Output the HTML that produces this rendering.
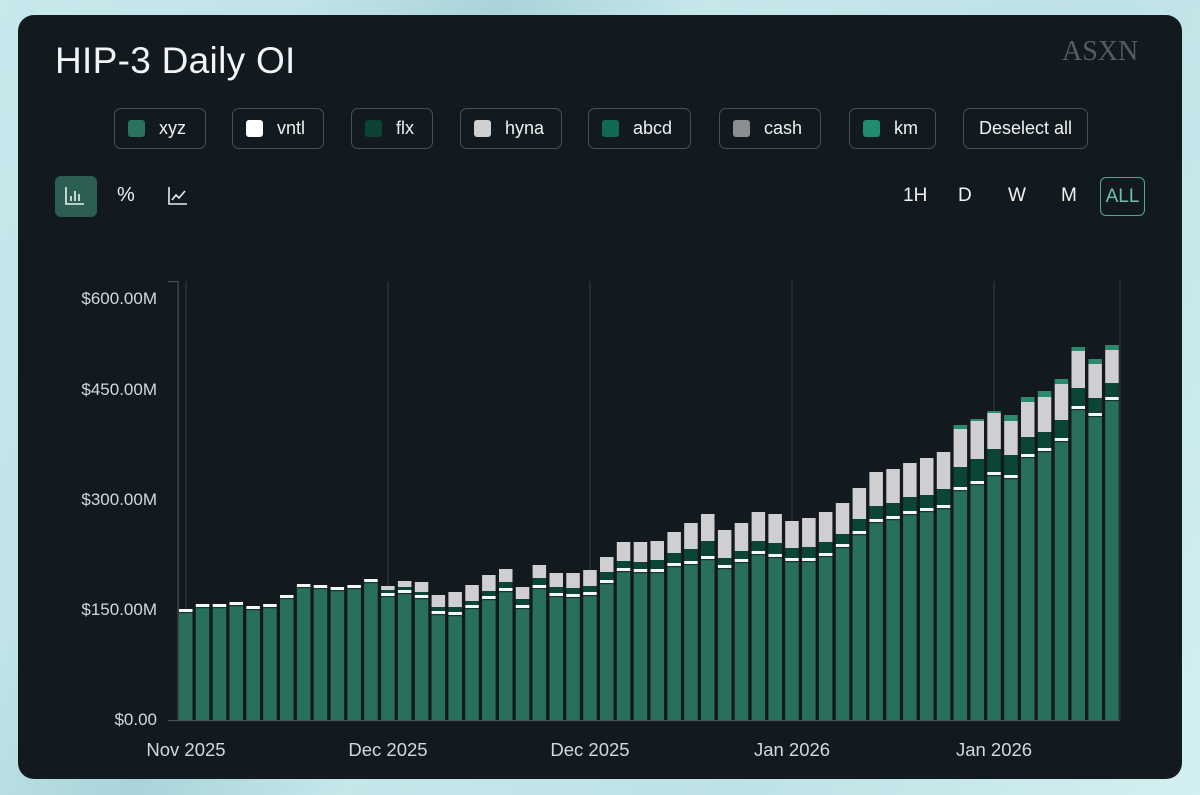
<!DOCTYPE html>
<html><head><meta charset="utf-8">
<style>
*{margin:0;padding:0;box-sizing:border-box}
body{width:1200px;height:795px;overflow:hidden;font-family:"Liberation Sans",sans-serif;
background:linear-gradient(115deg,#c6e9ec 0%,#bfe3e7 20%,#a9d4da 32%,#c4e7ea 45%,#bde2e6 70%,#d3eff1 100%);position:relative}
.card{position:absolute;left:18px;top:15px;width:1164px;height:764px;background:#121a1f;border-radius:16px}
.title{position:absolute;left:55px;top:40px;font-size:37px;color:#f2f4f5;letter-spacing:0.3px}
.logo{position:absolute;left:1062px;top:36px;font-family:"Liberation Serif",serif;font-size:28px;color:#575c60;letter-spacing:0px}
.btn{position:absolute;top:108px;height:41px;border:1.5px solid #495156;border-radius:7px;color:#eef0f1;font-size:18px;display:flex;align-items:center;white-space:nowrap}
.sw{width:17px;height:17px;border-radius:3px;margin:0 14px 0 13px;flex-shrink:0}
.rng{position:absolute;top:185px;font-size:19px;color:#f0f2f3}
.ylab{position:absolute;right:1043px;font-size:17px;color:#d4d8db;text-align:right}
.xlab{position:absolute;top:739px;font-size:18.5px;color:#d4d8db;transform:translateX(-50%);white-space:nowrap}
</style></head><body>
<div class="card"></div>
<div class="title">HIP-3 Daily OI</div>
<div class="logo">ASXN</div>

<div class="btn" style="left:114px;width:92px"><div class="sw" style="background:#2a735e"></div>xyz</div>
<div class="btn" style="left:232px;width:92px"><div class="sw" style="background:#ffffff"></div>vntl</div>
<div class="btn" style="left:351px;width:82px"><div class="sw" style="background:#0c4434"></div>flx</div>
<div class="btn" style="left:460px;width:102px"><div class="sw" style="background:#d0d0d2"></div>hyna</div>
<div class="btn" style="left:588px;width:103px"><div class="sw" style="background:#106a52"></div>abcd</div>
<div class="btn" style="left:719px;width:102px;"><div class="sw" style="background:#8d8e90"></div>cash</div>
<div class="btn" style="left:849px;width:87px"><div class="sw" style="background:#218b6f"></div>km</div>
<div class="btn" style="left:963px;width:125px;justify-content:center">Deselect all</div>

<div style="position:absolute;left:55px;top:176px;width:42px;height:41px;background:#2c5e53;border-radius:6px"></div>
<svg style="position:absolute;left:64px;top:186px" width="22" height="20" viewBox="0 0 22 20" fill="none" stroke="#e8eeec" stroke-width="1.6">
<path d="M2 1V18H20"/><path d="M7 15V10M11 15V5M15 15V8"/></svg>
<div style="position:absolute;left:117px;top:184px;font-size:20px;color:#f0f2f3">%</div>
<svg style="position:absolute;left:167px;top:186px" width="22" height="20" viewBox="0 0 22 20" fill="none" stroke="#e8eeec" stroke-width="1.6">
<path d="M2 1V18H20"/><path d="M5 14L9 9L12 12L18 5"/></svg>

<div class="rng" style="left:903px">1H</div>
<div class="rng" style="left:958px">D</div>
<div class="rng" style="left:1008px">W</div>
<div class="rng" style="left:1061px">M</div>
<div style="position:absolute;left:1100px;top:177px;width:45px;height:39px;border:1.5px solid #4fa898;border-radius:6px;color:#6fc0ad;font-size:19px;display:flex;align-items:center;justify-content:center">ALL</div>

<div class="ylab" style="top:289px">$600.00M</div>
<div class="ylab" style="top:380px">$450.00M</div>
<div class="ylab" style="top:490px">$300.00M</div>
<div class="ylab" style="top:600px">$150.00M</div>
<div class="ylab" style="top:710px">$0.00</div>

<div class="xlab" style="left:186px">Nov 2025</div>
<div class="xlab" style="left:388px">Dec 2025</div>
<div class="xlab" style="left:590px">Dec 2025</div>
<div class="xlab" style="left:792px">Jan 2026</div>
<div class="xlab" style="left:994px">Jan 2026</div>

<svg id="ch" style="position:absolute;left:0;top:0" width="1200" height="795"></svg>
<script>
var s='';
var g='#394046';
[186,388,590,792,994,1120].forEach(function(x){s+='<rect x="'+(x-0.5)+'" y="281" width="1" height="439" fill="'+g+'"/>';});
s+='<rect x="177.5" y="281" width="1.2" height="440" fill="#4a5156"/>';
s+='<rect x="168" y="281" width="10" height="1.2" fill="#4a5156"/>';
s+='<rect x="168" y="720" width="952" height="1.2" fill="#4a5156"/>';
var d=[[609,609,609,609],[604,604,604,604],[604,604,604,604],[602,602,602,602],[606,606,606,606],[604,604,604,604],[595,595,595,595],[584,584,584,584],[585,585,585,585],[587,587,587,587],[585,585,585,585],[579,579,579,579],
[586,586,590,593],[581,581,587,590],[582,582,592,595],[595,595,607,611],[592,592,607,612],[585,585,601,605],[575,575,591,596],[569,569,582,588],[587,587,599,605],[565,565,578,585],[573,573,587,593],[573,573,588,594],[570,570,586,592],[557,557,572,580],[542,542,561,568],[542,542,562,569],[541,541,560,569],[532,532,553,563],[523,523,549,561],[514,514,541,556],[530,530,558,565],[523,523,551,559],[512,512,541,551],[514,514,543,554],[521,521,548,558],[518,518,547,558],[512,512,542,553],[503,503,534,544],[488,488,519,531],[472,472,506,519],[469,469,503,516],[463,463,497,511],[458,458,495,508],[452,452,489,505],
[425,429,467,487],[419,421,459,481],[411,413,449,472],[415,421,455,475],[397,402,437,454],[391,397,432,448],[379,384,420,438],[347,351,388,406],[359,364,398,413],[345,350,383,397]];
d.forEach(function(b,i){
 var x=(179+16.84*i).toFixed(1),w=13.5;
 function r(y1,y2,c){if(y2>y1)s+='<rect x="'+x+'" y="'+y1+'" width="'+w+'" height="'+(y2-y1)+'" fill="'+c+'"/>';}
 r(b[0],b[1],'#2a8a6e');
 r(b[1],b[2],'#cfcfd2');
 r(b[2],b[3],'#0b4535');
 r(b[3],b[3]+3,'#f4f7f6');
 r(b[3]+3,b[3]+4.2,'#123a30');
 r(b[3]+4.2,720,'#28705b');
});
document.getElementById('ch').innerHTML=s;
</script>
</body></html>
